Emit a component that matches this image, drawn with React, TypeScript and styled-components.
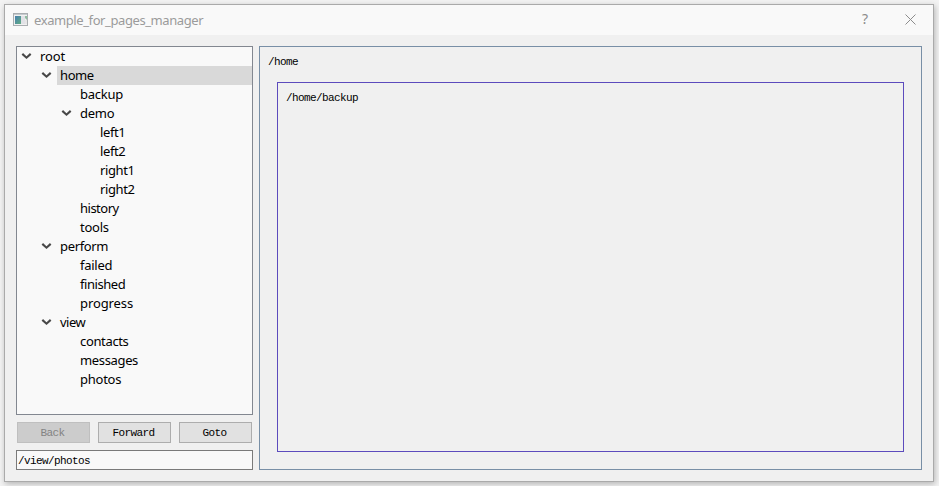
import React from "react";
import styled, { createGlobalStyle } from "styled-components";

const GlobalStyle = createGlobalStyle`
  * { box-sizing: border-box; }
  html, body { margin: 0; padding: 0; }
  body { background: #f0f0f0; overflow: hidden; }
`;

const mono = `"Liberation Mono", monospace`;
const sans = `"Noto Sans", sans-serif`;

const Desktop = styled.div`
  width: 939px;
  height: 486px;
  padding: 4px 5px 4px 4px;
  background: #f3f3f3;
  overflow: hidden;
`;

const Window = styled.div`
  display: flex;
  flex-direction: column;
  width: 930px;
  height: 478px;
  background: #f0f0f0;
  border: 1px solid #aaaaaa;
  box-shadow: 1px 2px 6px rgba(0, 0, 0, 0.26);
`;

const TitleBar = styled.header`
  display: flex;
  align-items: center;
  flex: none;
  height: 30px;
  padding: 0 17px 2px 8px;
  background: #f9f9f9;
`;

const Title = styled.span`
  flex: 1;
  margin-left: 6px;
  padding-top: 1px;
  font: 13px/18px ${sans};
  letter-spacing: -0.41px;
  color: #9b9b9b;
`;

const HelpButton = styled.span`
  width: 10px;
  margin-right: 35px;
  font: 14px/18px ${sans};
  text-align: center;
  color: #8c8c8c;
`;

const Content = styled.main`
  display: flex;
  flex: 1;
  gap: 6px;
  padding: 11px;
`;

const Sidebar = styled.aside`
  display: flex;
  flex-direction: column;
  width: 237px;
`;

const Tree = styled.div`
  height: 369px;
  border: 1px solid #828790;
  background: #f9f9f9;
`;

const TreeRow = styled.div<{ $depth: number }>`
  display: flex;
  height: 19px;
  padding-left: ${({ $depth }) => $depth * 20}px;
`;

const Expander = styled.span`
  display: flex;
  flex: none;
  width: 20px;
  padding: 6px 0 0 4px;
`;

const TreeLabel = styled.span<{ $selected: boolean; $spacing: number }>`
  flex: 1;
  padding-left: 3px;
  font: 13px/19px ${sans};
  letter-spacing: ${({ $spacing }) => $spacing}px;
  color: #000;
  background: ${({ $selected }) => ($selected ? "#d9d9d9" : "transparent")};
`;

const ButtonRow = styled.div`
  display: flex;
  gap: 8px;
  margin: 7px 1px;
`;

const PushButton = styled.button`
  width: 73px;
  height: 21px;
  padding: 1px 2px 0 0;
  border: 1px solid #adadad;
  border-radius: 0;
  background: #e1e1e1;
  color: #000;
  font: 11px/17px ${mono};
  letter-spacing: -0.6px;

  &:disabled {
    border-color: #bfbfbf;
    background: #cccccc;
    color: #838383;
  }
`;

const PathInput = styled.input`
  width: 237px;
  height: 20px;
  padding: 1px 2px 0 1px;
  border: 1px solid #7a7a7a;
  border-radius: 0;
  outline: none;
  background: #f9f9f9;
  color: #000;
  font: 11px/17px ${mono};
  letter-spacing: -0.6px;
`;

const Page = styled.section<{ $border: string }>`
  display: flex;
  flex-direction: column;
  flex: 1;
  border: 1px solid ${({ $border }) => $border};
`;

const OuterPage = styled(Page)`
  padding: 8px 17px 17px 8px;
`;

const InnerPage = styled(Page)`
  margin: 13px 0 0 9px;
  padding: 8px;
`;

const PagePath = styled.span`
  height: 14px;
  font: 11px/14px ${mono};
  letter-spacing: -0.6px;
  color: #000;
`;

type Node = { name: string; depth: number; open?: boolean; selected?: boolean; spacing?: number };

const nodes: Node[] = [
  { name: "root", depth: 0, open: true, spacing: -0.1 },
  { name: "home", depth: 1, open: true, selected: true, spacing: -0.4 },
  { name: "backup", depth: 2 },
  { name: "demo", depth: 2, open: true },
  { name: "left1", depth: 3, spacing: -0.4 },
  { name: "left2", depth: 3, spacing: -0.4 },
  { name: "right1", depth: 3, spacing: -0.4 },
  { name: "right2", depth: 3, spacing: -0.4 },
  { name: "history", depth: 2, spacing: -0.5 },
  { name: "tools", depth: 2 },
  { name: "perform", depth: 1, open: true, spacing: -0.35 },
  { name: "failed", depth: 2 },
  { name: "finished", depth: 2, spacing: -0.45 },
  { name: "progress", depth: 2, spacing: -0.1 },
  { name: "view", depth: 1, open: true, spacing: -0.5 },
  { name: "contacts", depth: 2, spacing: -0.35 },
  { name: "messages", depth: 2, spacing: -0.35 },
  { name: "photos", depth: 2 },
];

const Chevron = () => (
  <svg width="11" height="7" viewBox="0 0 11 7" fill="none">
    <path d="M1.3 0.9 L5.5 4.7 L9.7 0.9" stroke="#484848" strokeWidth="2.1" />
  </svg>
);

const AppIcon = () => (
  <svg width="15" height="13" viewBox="0 0 15 13">
    <defs>
      <linearGradient id="pane" x1="0" y1="0" x2="1" y2="1">
        <stop offset="0" stopColor="#477fae" />
        <stop offset="1" stopColor="#62ad83" />
      </linearGradient>
    </defs>
    <rect x="0.5" y="0.5" width="14" height="12" fill="#f1f1f1" stroke="#a9adb0" />
    <rect x="1" y="1" width="13" height="1" fill="#c6cbcf" />
    <rect x="2" y="3" width="6" height="8" fill="url(#pane)" />
    <rect x="8" y="3" width="4" height="8" fill="#e1e1e6" />
    <path d="M12 3 H14 V7 L12 5 Z" fill="#8fbda0" />
    <rect x="12" y="7" width="2" height="4" fill="#e6e6e6" />
  </svg>
);

const CloseIcon = () => (
  <svg width="11" height="11" viewBox="0 0 11 11">
    <path d="M0.5 0.5 L10.5 10.5 M10.5 0.5 L0.5 10.5" stroke="#8c8c8c" strokeWidth="1" />
  </svg>
);

export default function App() {
  return (
    <Desktop>
      <GlobalStyle />
      <Window>
        <TitleBar>
          <AppIcon />
          <Title>example_for_pages_manager</Title>
          <HelpButton>?</HelpButton>
          <CloseIcon />
        </TitleBar>
        <Content>
          <Sidebar>
            <Tree>
              {nodes.map((n) => (
                <TreeRow key={n.name} $depth={n.depth}>
                  <Expander>{n.open && <Chevron />}</Expander>
                  <TreeLabel $selected={!!n.selected} $spacing={n.spacing ?? -0.25}>
                    {n.name}
                  </TreeLabel>
                </TreeRow>
              ))}
            </Tree>
            <ButtonRow>
              <PushButton disabled>Back</PushButton>
              <PushButton>Forward</PushButton>
              <PushButton>Goto</PushButton>
            </ButtonRow>
            <PathInput defaultValue="/view/photos" />
          </Sidebar>
          <OuterPage $border="#788fa6">
            <PagePath>/home</PagePath>
            <InnerPage $border="#5c4bbd">
              <PagePath>/home/backup</PagePath>
            </InnerPage>
          </OuterPage>
        </Content>
      </Window>
    </Desktop>
  );
}
